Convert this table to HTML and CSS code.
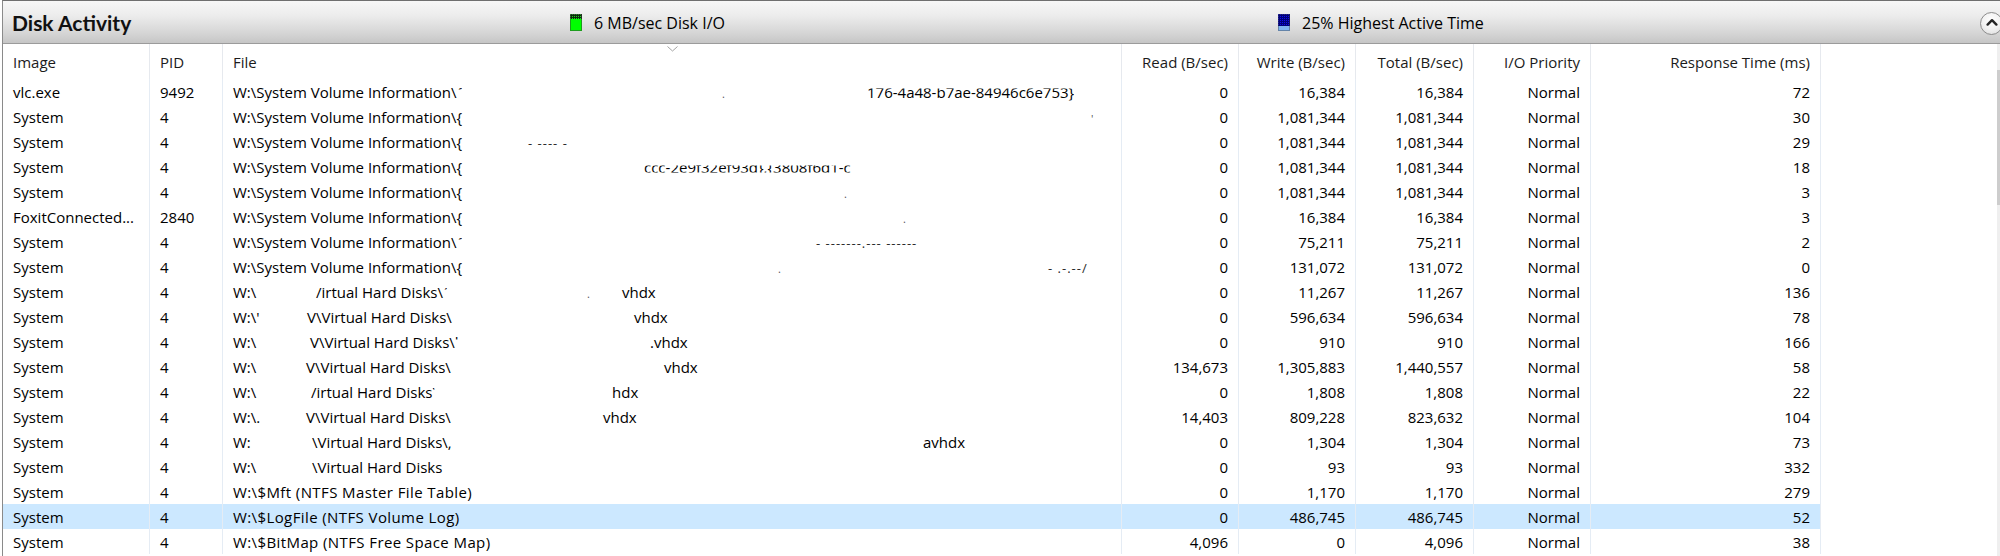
FILE: index.html
```html
<!DOCTYPE html>
<html>
<head>
<meta charset="utf-8">
<title>Disk Activity</title>
<link rel="stylesheet" href="styles.css">
</head>
<body>
<div class="panel">
  <div class="titlebar">
    <div class="title">Disk Activity</div>
    <div class="legend legend-io">
      <svg class="swatch" viewBox="0 0 12 17">
        <defs><pattern id="gdots" width="2" height="2" patternUnits="userSpaceOnUse"><rect width="2" height="2" fill="#0b2b0b"/><rect width="1" height="1" fill="#1fd41f"/></pattern></defs>
        <rect width="12" height="17" fill="#00ff00"/>
        <rect width="12" height="5" fill="url(#gdots)"/>
        <rect x="0.5" y="0.5" width="11" height="16" fill="none" stroke="#3c3c3c" stroke-width="1" opacity="0.5"/>
      </svg>
      <span>6 MB/sec Disk I/O</span>
    </div>
    <div class="legend legend-active">
      <svg class="swatch" viewBox="0 0 12 17">
        <defs><pattern id="bgrid" width="2" height="2" patternUnits="userSpaceOnUse"><rect width="2" height="2" fill="#00007a"/><rect width="1" height="1" fill="#1010e8"/></pattern></defs>
        <rect width="12" height="17" fill="#7fb4f2"/>
        <rect width="12" height="12" fill="url(#bgrid)"/>
        <rect x="0.5" y="0.5" width="11" height="16" fill="none" stroke="#3c3c3c" stroke-width="1" opacity="0.4"/>
      </svg>
      <span>25% Highest Active Time</span>
    </div>
    <div class="collapse">
      <svg viewBox="0 0 12 8" class="chev-up"><path d="M1.6 6.6 L6 2.2 L10.4 6.6" fill="none" stroke="#262626" stroke-width="2.4" stroke-linecap="round" stroke-linejoin="round"/></svg>
    </div>
  </div>

  <div class="main">
    <div class="table">
      <div class="row head">
        <div class="c">Image</div>
        <div class="c">PID</div>
        <div class="c file-head">File<svg class="sort" viewBox="0 0 11 6"><polyline points="0.5,0.5 5.5,5 10.5,0.5" fill="none" stroke="#a3a3a3" stroke-width="1"/></svg></div>
        <div class="c num">Read (B/sec)</div>
        <div class="c num">Write (B/sec)</div>
        <div class="c num">Total (B/sec)</div>
        <div class="c num">I/O Priority</div>
        <div class="c num">Response Time (ms)</div>
      </div>

      <div class="row">
        <div class="c">vlc.exe</div><div class="c">9492</div>
        <div class="c"><span class="seg" style="width:489px">W:\System Volume Information\<span class="cut-top">{</span></span><span class="seg" style="width:145px"><span class="mark">.</span></span><span class="frag frag-soft">176-4a48-b7ae-84946c6e753}</span></div>
        <div class="c num">0</div><div class="c num">16,384</div><div class="c num">16,384</div><div class="c num">Normal</div><div class="c num">72</div>
      </div>
      <div class="row">
        <div class="c">System</div><div class="c">4</div>
        <div class="c"><span class="seg" style="width:858px">W:\System Volume Information\{</span><span class="mark">'</span></div>
        <div class="c num">0</div><div class="c num">1,081,344</div><div class="c num">1,081,344</div><div class="c num">Normal</div><div class="c num">30</div>
      </div>
      <div class="row">
        <div class="c">System</div><div class="c">4</div>
        <div class="c"><span class="seg" style="width:295px">W:\System Volume Information\{</span><span class="dash">-  ----  -</span></div>
        <div class="c num">0</div><div class="c num">1,081,344</div><div class="c num">1,081,344</div><div class="c num">Normal</div><div class="c num">29</div>
      </div>
      <div class="row">
        <div class="c">System</div><div class="c">4</div>
        <div class="c"><span class="seg" style="width:411px">W:\System Volume Information\{</span><span class="frag">ccc-2e9f32ef93d},{3808f6d1-c</span></div>
        <div class="c num">0</div><div class="c num">1,081,344</div><div class="c num">1,081,344</div><div class="c num">Normal</div><div class="c num">18</div>
      </div>
      <div class="row">
        <div class="c">System</div><div class="c">4</div>
        <div class="c"><span class="seg" style="width:611px">W:\System Volume Information\{</span><span class="mark">.</span></div>
        <div class="c num">0</div><div class="c num">1,081,344</div><div class="c num">1,081,344</div><div class="c num">Normal</div><div class="c num">3</div>
      </div>
      <div class="row">
        <div class="c">FoxitConnected...</div><div class="c">2840</div>
        <div class="c"><span class="seg" style="width:670px">W:\System Volume Information\{</span><span class="mark">.</span></div>
        <div class="c num">0</div><div class="c num">16,384</div><div class="c num">16,384</div><div class="c num">Normal</div><div class="c num">3</div>
      </div>
      <div class="row">
        <div class="c">System</div><div class="c">4</div>
        <div class="c"><span class="seg" style="width:583px">W:\System Volume Information\<span class="cut-top">{</span></span><span class="dash">-  -------.---  ------</span></div>
        <div class="c num">0</div><div class="c num">75,211</div><div class="c num">75,211</div><div class="c num">Normal</div><div class="c num">2</div>
      </div>
      <div class="row">
        <div class="c">System</div><div class="c">4</div>
        <div class="c"><span class="seg" style="width:545px">W:\System Volume Information\{</span><span class="seg" style="width:270px"><span class="mark">.</span></span><span class="dash">-  .-.--/</span></div>
        <div class="c num">0</div><div class="c num">131,072</div><div class="c num">131,072</div><div class="c num">Normal</div><div class="c num">0</div>
      </div>
      <div class="row">
        <div class="c">System</div><div class="c">4</div>
        <div class="c"><span class="seg" style="width:83px">W:\</span><span class="seg" style="width:271px">/irtual Hard Disks\<span class="cut-top">(</span></span><span class="seg" style="width:35px"><span class="mark">.</span></span>vhdx</div>
        <div class="c num">0</div><div class="c num">11,267</div><div class="c num">11,267</div><div class="c num">Normal</div><div class="c num">136</div>
      </div>
      <div class="row">
        <div class="c">System</div><div class="c">4</div>
        <div class="c"><span class="seg" style="width:74px">W:\'</span><span class="seg" style="width:327px">V\Virtual Hard Disks\</span>vhdx</div>
        <div class="c num">0</div><div class="c num">596,634</div><div class="c num">596,634</div><div class="c num">Normal</div><div class="c num">78</div>
      </div>
      <div class="row">
        <div class="c">System</div><div class="c">4</div>
        <div class="c"><span class="seg" style="width:77px">W:\</span><span class="seg" style="width:340px">V\Virtual Hard Disks\<span class="cut-top">l</span></span>.vhdx</div>
        <div class="c num">0</div><div class="c num">910</div><div class="c num">910</div><div class="c num">Normal</div><div class="c num">166</div>
      </div>
      <div class="row">
        <div class="c">System</div><div class="c">4</div>
        <div class="c"><span class="seg" style="width:73px">W:\</span><span class="seg" style="width:358px">V\Virtual Hard Disks\</span>vhdx</div>
        <div class="c num">134,673</div><div class="c num">1,305,883</div><div class="c num">1,440,557</div><div class="c num">Normal</div><div class="c num">58</div>
      </div>
      <div class="row">
        <div class="c">System</div><div class="c">4</div>
        <div class="c"><span class="seg" style="width:78px">W:\</span><span class="seg" style="width:301px">/irtual Hard Disks<span class="cut-top">\</span></span>hdx</div>
        <div class="c num">0</div><div class="c num">1,808</div><div class="c num">1,808</div><div class="c num">Normal</div><div class="c num">22</div>
      </div>
      <div class="row">
        <div class="c">System</div><div class="c">4</div>
        <div class="c"><span class="seg" style="width:73px">W:\.</span><span class="seg" style="width:297px">V\Virtual Hard Disks\</span>vhdx</div>
        <div class="c num">14,403</div><div class="c num">809,228</div><div class="c num">823,632</div><div class="c num">Normal</div><div class="c num">104</div>
      </div>
      <div class="row">
        <div class="c">System</div><div class="c">4</div>
        <div class="c"><span class="seg" style="width:79px">W:</span><span class="seg" style="width:611px">\Virtual Hard Disks\,</span>avhdx</div>
        <div class="c num">0</div><div class="c num">1,304</div><div class="c num">1,304</div><div class="c num">Normal</div><div class="c num">73</div>
      </div>
      <div class="row">
        <div class="c">System</div><div class="c">4</div>
        <div class="c"><span class="seg" style="width:79px">W:\</span>\Virtual Hard Disks</div>
        <div class="c num">0</div><div class="c num">93</div><div class="c num">93</div><div class="c num">Normal</div><div class="c num">332</div>
      </div>
      <div class="row">
        <div class="c">System</div><div class="c">4</div>
        <div class="c wide">W:\$Mft (NTFS Master File Table)</div>
        <div class="c num">0</div><div class="c num">1,170</div><div class="c num">1,170</div><div class="c num">Normal</div><div class="c num">279</div>
      </div>
      <div class="row sel">
        <div class="c">System</div><div class="c">4</div>
        <div class="c wide">W:\$LogFile (NTFS Volume Log)</div>
        <div class="c num">0</div><div class="c num">486,745</div><div class="c num">486,745</div><div class="c num">Normal</div><div class="c num">52</div>
      </div>
      <div class="row">
        <div class="c">System</div><div class="c">4</div>
        <div class="c wide">W:\$BitMap (NTFS Free Space Map)</div>
        <div class="c num">4,096</div><div class="c num">0</div><div class="c num">4,096</div><div class="c num">Normal</div><div class="c num">38</div>
      </div>
    </div>
    <div class="filler"></div>
    <div class="scrollbar"><div class="thumb"></div></div>
  </div>
</div>
</body>
</html>
```
FILE: styles.css
```css
* { box-sizing: border-box; }

html, body {
  margin: 0;
  padding: 0;
  background: #ffffff;
  overflow: hidden;
}

body {
  width: 2000px;
  height: 556px;
  font-family: "Open Sans", "Noto Sans", sans-serif;
  font-size: 15px;
  color: #000000;
}

.panel {
  margin-left: 2px;
  height: 556px;
  border-left: 1px solid #8a8a8a;
  border-top: 1px solid #6f6f6f;
  display: flex;
  flex-direction: column;
}

.titlebar {
  flex: none;
  height: 43px;
  display: flex;
  align-items: center;
  background: linear-gradient(#f7f7f7 0%, #ececec 35%, #d6d6d6 75%, #c6c6c6 100%);
  border-bottom: 1px solid #9b9b9b;
}

.title {
  flex: 0 0 567px;
  padding-left: 9px;
  padding-top: 1px;
  font-family: Lato, "Open Sans", sans-serif;
  font-size: 21px;
  font-weight: 700;
  color: #111111;
}

.legend {
  display: flex;
  align-items: center;
  gap: 12px;
  font-size: 16px;
  padding-top: 1px;
}

.legend-io { flex: 0 0 708px; }
.legend-active { flex: 1; }

.swatch {
  display: block;
  width: 12px;
  height: 17px;
}

.collapse {
  flex: none;
  width: 23px;
  height: 23px;
  margin-right: -3px;
  margin-top: 2px;
  border-radius: 50%;
  border: 1px solid #8d8d8d;
  background: radial-gradient(circle at 50% 35%, #ffffff 0%, #f2f2f2 50%, #d9d9d9 100%);
  display: flex;
  align-items: center;
  justify-content: center;
}

.chev-up {
  width: 12px;
  height: 8px;
  display: block;
  margin-top: -2px;
}

.main {
  flex: 1;
  display: flex;
  min-height: 0;
}

.table {
  flex: none;
  width: 1818px;
}

.row {
  display: grid;
  grid-template-columns: 147px 73px 899px 117px 117px 118px 117px 230px;
  height: 25px;
  line-height: 25px;
}

.row.head {
  height: 35px;
  line-height: 35px;
  color: #1b1b1b;
}

.row.sel {
  background: #cce8ff;
}

.c {
  border-right: 1px solid #e5ecf4;
  padding: 1px 10px 0 10px;
  white-space: nowrap;
  overflow: hidden;
}

.c.wide { letter-spacing: 0.4px; }

.row.head .c { border-right-color: #e6e9ee; }

.c.num { text-align: right; }

.file-head {
  position: relative;
}

.sort {
  position: absolute;
  top: 2px;
  left: 444px;
  width: 11px;
  height: 6px;
  display: block;
}

.seg {
  display: inline-block;
  vertical-align: top;
}

.cut-top {
  display: inline-block;
  clip-path: inset(0 0 62% 0);
}

.frag {
  display: inline-block;
  vertical-align: top;
  clip-path: inset(42% 0 30% 0);
}

.frag-soft {
  clip-path: inset(34% 0 18% 0);
}

.mark {
  color: #555555;
  font-size: 11px;
}

.dash {
  color: #2b2b2b;
  font-size: 13px;
  letter-spacing: 1px;
}

.filler { flex: 1; }

.scrollbar {
  flex: none;
  width: 3px;
  background: #efefef;
  padding-top: 26px;
}

.thumb {
  height: 135px;
  background: #cdcdcd;
}
```
